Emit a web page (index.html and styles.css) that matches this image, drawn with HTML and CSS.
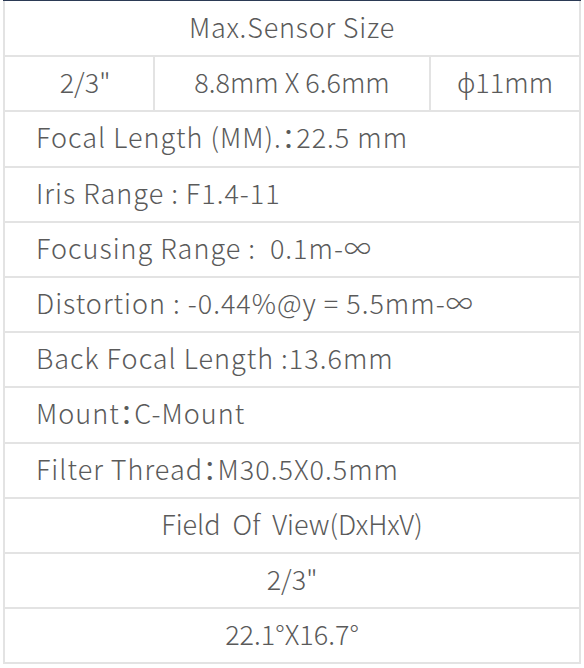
FILE: index.html
```html
<!DOCTYPE html>
<html lang="en">

<head>
    <meta charset="UTF-8">
    <meta name="viewport" content="width=device-width, initial-scale=1.0">
    <title>Lens Specification</title>

    <link rel="stylesheet" href="styles.css">
</head>

<body>

    <div class="topline"></div>

    <table class="spec">
        <colgroup>
            <col class="col-side">
            <col class="col-mid">
            <col class="col-side">
        </colgroup>
        <tr>
            <td colspan="3" class="center title">Max.Sensor Size</td>
        </tr>
        <tr>
            <td class="center first">2/3"</td>
            <td class="center">8.8mm X 6.6mm</td>
            <td class="center">ϕ11mm</td>
        </tr>
        <tr>
            <td colspan="3">Focal Length (MM).<span class="fw">：</span>22.5 mm</td>
        </tr>
        <tr>
            <td colspan="3">Iris Range : F1.4-11</td>
        </tr>
        <tr>
            <td colspan="3">Focusing Range :&nbsp; 0.1m-∞</td>
        </tr>
        <tr>
            <td colspan="3">Distortion : -0.44%@y = 5.5mm-∞</td>
        </tr>
        <tr>
            <td colspan="3">Back Focal Length :13.6mm</td>
        </tr>
        <tr>
            <td colspan="3">Mount<span class="fw">：</span>C-Mount</td>
        </tr>
        <tr>
            <td colspan="3">Filter Thread<span class="fw">：</span>M30.5X0.5mm</td>
        </tr>
        <tr>
            <td colspan="3" class="center">Field&nbsp; Of&nbsp; View(DxHxV)</td>
        </tr>
        <tr>
            <td colspan="3" class="center">2/3"</td>
        </tr>
        <tr>
            <td colspan="3" class="center">22.1°X16.7°</td>
        </tr>
    </table>

</body>

</html>
```

FILE: styles.css
```css
body {
    margin: 0;
    background: #ffffff;
    font-family: "Noto Sans CJK SC", "Noto Sans", sans-serif;
    color: #5a5a5a;
}

.topline {
    height: 1px;
    background-color: #2b3a55;
    margin: 0 3px 0 3px;
}

.spec {
    border-collapse: collapse;
    margin-left: 3px;
    width: 578px;
    table-layout: fixed;
}

.col-side {
    width: 150px;
}

.spec td {
    border: 2px solid #e3e3e3;
    height: 55.2px;
    padding: 0 0 4px 31px;
    font-size: 27px;
    font-weight: 300;
    letter-spacing: 1px;
    white-space: nowrap;
    box-sizing: border-box;
}

.spec tr:first-child td {
    border-top: none;
}

.spec td.center {
    text-align: center;
    padding: 0 0 4px 0;
    letter-spacing: 0;
}

.spec td.title {
    letter-spacing: 0.8px;
}

.spec td.first {
    padding-left: 12px;
}

.fw {
    font-feature-settings: "halt";
    font-weight: 400;
}
```
